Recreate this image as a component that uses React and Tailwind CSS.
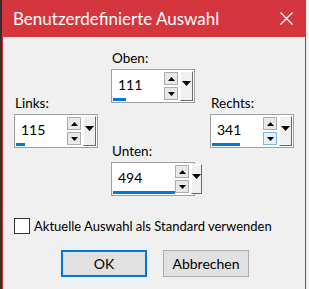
import React from "react";

const font = { fontFamily: 'Lato, "Noto Sans", sans-serif' };

function Tri({ dir = "up" }) {
  return (
    <svg width="7" height="4" viewBox="0 0 7 4">
      {dir === "up" ? <polygon points="0,4 7,4 3.5,0" fill="#000" /> : <polygon points="0,0 7,0 3.5,4" fill="#000" />}
    </svg>
  );
}

function Spin({ value, bar, hoverDown = false }) {
  return (
    <div className="w-[84px] h-[34px] border border-[#a0a0a0] bg-white flex">
      <div className="flex-1 flex flex-col pl-[1px]">
        <div className="flex-1 flex items-center pl-[5px] pt-[1px] text-[14px] text-black leading-none">{value}</div>
        <div className="h-[3px] mb-[1px] bg-[#0078d7]" style={{ width: bar }} />
      </div>
      <div className="flex flex-col gap-[2px] pt-[2px]">
        <div className="w-[14px] h-[13px] border border-[#adadad] bg-[#e8e8e8] flex items-center justify-center">
          <Tri dir="up" />
        </div>
        <div className={`w-[14px] h-[13px] border ${hoverDown ? "border-[#7eb4ea] bg-[#e5f1fb]" : "border-[#adadad] bg-[#e8e8e8]"} flex items-center justify-center`}>
          <Tri dir="down" />
        </div>
      </div>
      <div className="ml-[2px] mr-[1px] my-[1px] w-[13px] border-t border-l border-t-white border-l-white border-r border-b border-r-[#696969] border-b-[#696969] bg-[#f0f0f0] flex items-start justify-center pt-[9px]">
        <svg width="9" height="5" viewBox="0 0 9 5"><polygon points="0,0 9,0 4.5,5" fill="#000" /></svg>
      </div>
    </div>
  );
}

function Field({ label, value, bar, hoverDown }) {
  return (
    <div className="flex flex-col">
      <div className="text-[13.5px] leading-[17px] text-[#000] pl-[1px] mb-[2px]">{label}</div>
      <Spin value={value} bar={bar} hoverDown={hoverDown} />
    </div>
  );
}

export default function App() {
  return (
    <div className="w-[309px] h-[289px] overflow-hidden flex bg-[#f0f0f0]" style={font}>
      <div className="w-[2px] bg-[#3a2b33]" />
      <div className="w-[304px] border-x border-[#d13438] flex flex-col">
        <div className="h-[37px] -mx-[1px] bg-[#d5363d] flex items-center pl-[11px] pr-[13px] pb-[1px]">
          <div className="flex-1 text-white text-[17px] leading-none">Benutzerdefinierte Auswahl</div>
          <svg width="13" height="13" viewBox="0 0 13 13">
            <path d="M0.5 0.5 L12.5 12.5 M12.5 0.5 L0.5 12.5" stroke="#fff" strokeWidth="1.2" />
          </svg>
        </div>
        <div className="flex-1 bg-[#f0f0f0] flex flex-col">
          <div className="flex pl-[11px] pt-[13px]">
            <div className="pt-[45px]">
              <Field label="Links:" value="115" bar={9} />
            </div>
            <div className="ml-[13px] flex flex-col gap-[40px]">
              <Field label="Oben:" value="111" bar={13} />
              <Field label="Unten:" value="494" bar={62} />
            </div>
            <div className="ml-[15px] pt-[45px]">
              <Field label="Rechts:" value="341" bar={28} hoverDown />
            </div>
          </div>
          <div className="flex items-center mt-[22px] pl-[11px]">
            <div className="w-[16px] h-[16px] border border-[#333] bg-white" />
            <div className="ml-[4px] text-[13px] text-black leading-none">Aktuelle Auswahl als Standard verwenden</div>
          </div>
          <div className="flex mt-[16px] pl-[58px] gap-[16px]">
            <div className="w-[86px] h-[27px] border-2 border-[#0078d7] bg-[#e1e1e1] flex items-center justify-center text-[14px] text-black">OK</div>
            <div className="w-[86px] h-[27px] border border-[#adadad] bg-[#e1e1e1] flex items-center justify-center text-[14px] text-black">Abbrechen</div>
          </div>
        </div>
      </div>
      <div className="flex-1 bg-[#f3f0f0]" />
    </div>
  );
}
